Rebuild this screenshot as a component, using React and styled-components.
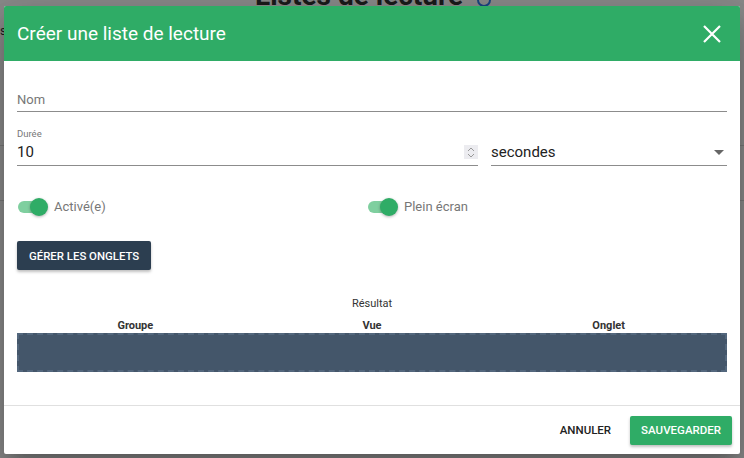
import styled, { createGlobalStyle } from "styled-components";

const GlobalStyle = createGlobalStyle`
    html, body {
        margin: 0;
        padding: 0;
        background: #ffffff;
        font-family: Roboto, "Liberation Sans", sans-serif;
    }
    * {
        box-sizing: border-box;
    }
`;

const Page = styled.div`
    position: relative;
    width: 744px;
    height: 458px;
    overflow: hidden;
    background: #ffffff;
`;

const PageTitle = styled.h1`
    margin: 0;
    position: absolute;
    top: -21px;
    left: 255px;
    display: flex;
    align-items: center;
    gap: 14px;
    font-size: 28px;
    font-weight: 700;
    color: #333;
`;

const InfoIcon = styled.span`
    width: 14px;
    height: 14px;
    border: 2px solid #2f80ed;
    border-radius: 50%;
    margin-top: 8px;
`;

const PageLine = styled.div`
    position: absolute;
    left: 0;
    right: 0;
    top: ${({ $top }) => $top}px;
    height: 1px;
    background: #ddd;
`;

const PageLetter = styled.span`
    position: absolute;
    left: 0;
    top: 24px;
    font-size: 12px;
    color: #333;
`;

const Backdrop = styled.div`
    position: absolute;
    inset: 0;
    background: rgba(0, 0, 0, 0.46);
`;

const Dialog = styled.div`
    position: absolute;
    left: 4px;
    top: 6px;
    width: 736px;
    height: 448px;
    background: #ffffff;
    border-radius: 2px;
    box-shadow: 0 11px 15px -7px rgba(0, 0, 0, 0.2), 0 24px 38px 3px rgba(0, 0, 0, 0.14), 0 9px 46px 8px rgba(0, 0, 0, 0.12);
    display: flex;
    flex-direction: column;
    overflow: hidden;
`;

const Header = styled.div`
    height: 55px;
    flex: none;
    background: #2fac66;
    display: flex;
    align-items: center;
    justify-content: space-between;
    padding: 0 16px 0 13px;
`;

const HeaderTitle = styled.h2`
    margin: 0;
    font-size: 19px;
    font-weight: 400;
    color: #ffffff;
`;

const CloseButton = styled.button`
    background: none;
    border: none;
    padding: 0;
    width: 24px;
    height: 24px;
    display: flex;
    align-items: center;
    justify-content: center;
    cursor: pointer;
`;

const Body = styled.div`
    flex: 1;
    padding: 19px 13px 0;
    display: flex;
    flex-direction: column;
`;

const Field = styled.div`
    flex: ${({ $grow }) => ($grow ? `${$grow} 1 0` : "none")};
    display: flex;
    flex-direction: column;
    justify-content: flex-end;
    border-bottom: 1px solid #8c8c8c;
    height: ${({ $height }) => $height}px;
    padding-bottom: 4px;
`;

const Placeholder = styled.span`
    font-size: 13px;
    color: #777;
`;

const SmallLabel = styled.span`
    font-size: 9.5px;
    color: #777;
    margin-bottom: 4px;
`;

const ValueRow = styled.div`
    display: flex;
    align-items: center;
    justify-content: space-between;
    font-size: 15px;
    color: #222;
`;

const Spinner = styled.span`
    width: 14px;
    height: 14px;
    background: #ececf0;
    display: flex;
    align-items: center;
    justify-content: center;
`;

const FieldRow = styled.div`
    display: flex;
    gap: 13px;
    margin-top: 18px;
`;

const SwitchRow = styled.div`
    display: grid;
    grid-template-columns: 350px 1fr;
    margin-top: 33px;
    padding-left: 1px;
`;

const SwitchItem = styled.div`
    display: flex;
    align-items: center;
    gap: 8px;
`;

const Track = styled.span`
    position: relative;
    width: 28px;
    height: 12px;
    border-radius: 6px;
    background: #7fcf9f;
`;

const Thumb = styled.span`
    position: absolute;
    right: -2px;
    top: -3px;
    width: 18px;
    height: 18px;
    border-radius: 50%;
    background: #2fac66;
    box-shadow: 0 1px 3px rgba(0, 0, 0, 0.3);
`;

const SwitchLabel = styled.span`
    font-size: 13px;
    color: #777;
`;

const DarkButton = styled.button`
    align-self: flex-start;
    margin-top: 27px;
    height: 29px;
    padding: 0 12px;
    background: #2c3e50;
    color: #ffffff;
    border: none;
    border-radius: 2px;
    font-family: Roboto, "Liberation Sans", sans-serif;
    font-size: 11.4px;
    font-weight: 500;
    box-shadow: 0 2px 3px rgba(0, 0, 0, 0.25);
`;

const ResultTitle = styled.div`
    margin-top: 27px;
    text-align: center;
    font-size: 11px;
    color: #333;
`;

const TableHead = styled.div`
    display: grid;
    grid-template-columns: repeat(3, 1fr);
    margin-top: 9px;
    text-align: center;
    font-size: 11px;
    font-weight: 700;
    color: #333;
    padding-bottom: 1px;
`;

const DropZone = styled.div`
    height: 39px;
    background: #44566a;
    border: 2px dashed #53677d;
`;

const Footer = styled.div`
    height: 49px;
    flex: none;
    border-top: 1px solid #e0e0e0;
    display: flex;
    align-items: center;
    justify-content: flex-end;
    gap: 10px;
    padding: 0 8px;
`;

const TextButton = styled.button`
    background: none;
    border: none;
    height: 29px;
    padding: 0 9px;
    font-family: Roboto, "Liberation Sans", sans-serif;
    font-size: 11.5px;
    font-weight: 500;
    color: #222;
`;

const GreenButton = styled.button`
    height: 29px;
    padding: 0 11px;
    background: #2fac66;
    border: none;
    border-radius: 2px;
    color: #ffffff;
    font-family: Roboto, "Liberation Sans", sans-serif;
    font-size: 11.5px;
    font-weight: 500;
    box-shadow: 0 2px 3px rgba(0, 0, 0, 0.25);
`;

const Switch = ({ label }) => (
    <SwitchItem>
        <Track><Thumb /></Track>
        <SwitchLabel>{label}</SwitchLabel>
    </SwitchItem>
);

export default function App() {
    return (
        <Page>
            <GlobalStyle />
            <PageTitle>Listes de lecture <InfoIcon /></PageTitle>
            <PageLetter>s</PageLetter>
            <PageLine $top={145} />
            <PageLine $top={200} />
            <Backdrop />
            <Dialog>
                <Header>
                    <HeaderTitle>Créer une liste de lecture</HeaderTitle>
                    <CloseButton>
                        <svg width="18" height="18" viewBox="0 0 18 18">
                            <path d="M1 1 L17 17 M17 1 L1 17" stroke="#fff" strokeWidth="2.2" />
                        </svg>
                    </CloseButton>
                </Header>
                <Body>
                    <Field $height={32}>
                        <Placeholder>Nom</Placeholder>
                    </Field>
                    <FieldRow>
                        <Field $grow={461} $height={36}>
                            <SmallLabel>Durée</SmallLabel>
                            <ValueRow>
                                <span>10</span>
                                <Spinner>
                                    <svg width="8" height="11" viewBox="0 0 8 11">
                                        <path d="M1 4 L4 1 L7 4 M1 7 L4 10 L7 7" stroke="#999" fill="none" strokeWidth="1" />
                                    </svg>
                                </Spinner>
                            </ValueRow>
                        </Field>
                        <Field $grow={236} $height={36}>
                            <ValueRow>
                                <span>secondes</span>
                                <svg width="10" height="5" viewBox="0 0 10 5" style={{ marginRight: 3 }}>
                                    <path d="M0 0 L10 0 L5 5 Z" fill="#666" />
                                </svg>
                            </ValueRow>
                        </Field>
                    </FieldRow>
                    <SwitchRow>
                        <Switch label="Activé(e)" />
                        <Switch label="Plein écran" />
                    </SwitchRow>
                    <DarkButton>GÉRER LES ONGLETS</DarkButton>
                    <ResultTitle>Résultat</ResultTitle>
                    <TableHead>
                        <span>Groupe</span>
                        <span>Vue</span>
                        <span>Onglet</span>
                    </TableHead>
                    <DropZone />
                </Body>
                <Footer>
                    <TextButton>ANNULER</TextButton>
                    <GreenButton>SAUVEGARDER</GreenButton>
                </Footer>
            </Dialog>
        </Page>
    );
}
